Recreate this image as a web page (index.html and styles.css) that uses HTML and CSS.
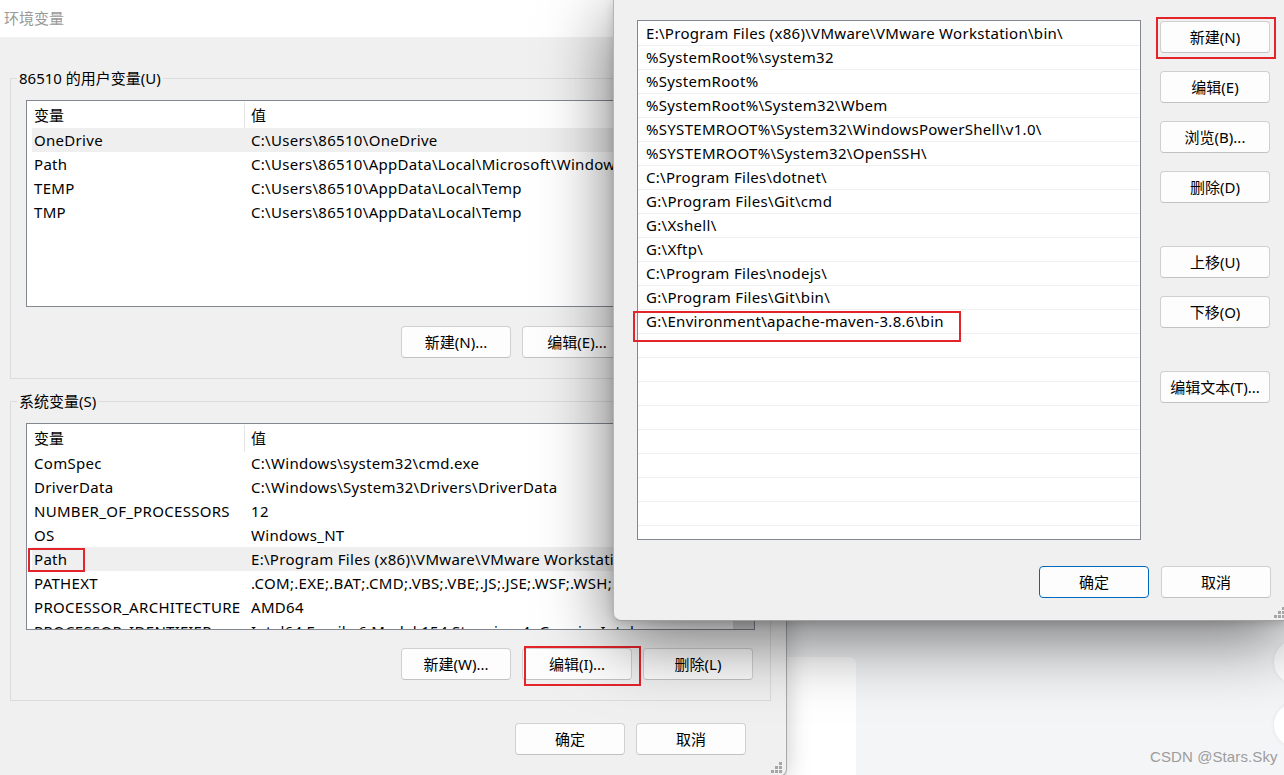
FILE: index.html
```html
<!DOCTYPE html>
<html lang="zh-CN">
<head>
<meta charset="utf-8">
<title>环境变量</title>
<link rel="stylesheet" href="styles.css">
</head>
<body>
<div class="desktop">
  <div class="bg-panel"></div>
  <div class="bg-circle circle-a"></div>
  <div class="bg-circle circle-b"></div>
  <div class="watermark">CSDN @Stars.Sky</div>

  <section class="win win-env">
    <header class="titlebar">环境变量</header>
    <div class="win-body">
      <fieldset class="group">
        <legend>86510 的用户变量(U)</legend>
        <div class="listview">
          <div class="lv-head"><span class="h1">变量</span><span class="h2">值</span></div>
          <div class="lv-row sel"><span class="c1">OneDrive</span><span class="c2">C:\Users\86510\OneDrive</span></div>
          <div class="lv-row"><span class="c1">Path</span><span class="c2">C:\Users\86510\AppData\Local\Microsoft\WindowsApps;</span></div>
          <div class="lv-row"><span class="c1">TEMP</span><span class="c2">C:\Users\86510\AppData\Local\Temp</span></div>
          <div class="lv-row"><span class="c1">TMP</span><span class="c2">C:\Users\86510\AppData\Local\Temp</span></div>
        </div>
        <div class="btn-row">
          <button class="btn">新建(N)...</button>
          <button class="btn">编辑(E)...</button>
          <button class="btn">删除(D)</button>
        </div>
      </fieldset>

      <fieldset class="group group-sys">
        <legend>系统变量(S)</legend>
        <div class="listview">
          <div class="lv-head"><span class="h1">变量</span><span class="h2">值</span></div>
          <div class="lv-row"><span class="c1">ComSpec</span><span class="c2">C:\Windows\system32\cmd.exe</span></div>
          <div class="lv-row"><span class="c1">DriverData</span><span class="c2">C:\Windows\System32\Drivers\DriverData</span></div>
          <div class="lv-row"><span class="c1">NUMBER_OF_PROCESSORS</span><span class="c2">12</span></div>
          <div class="lv-row"><span class="c1">OS</span><span class="c2">Windows_NT</span></div>
          <div class="lv-row sel"><span class="c1">Path</span><span class="c2">E:\Program Files (x86)\VMware\VMware Workstation\bin\;%SystemRoot%\system32</span><span class="mark mark-path"></span></div>
          <div class="lv-row"><span class="c1">PATHEXT</span><span class="c2">.COM;.EXE;.BAT;.CMD;.VBS;.VBE;.JS;.JSE;.WSF;.WSH;.MSC</span></div>
          <div class="lv-row"><span class="c1">PROCESSOR_ARCHITECTURE</span><span class="c2">AMD64</span></div>
          <div class="lv-row"><span class="c1">PROCESSOR_IDENTIFIER</span><span class="c2">Intel64 Family 6 Model 154 Stepping 4, GenuineIntel</span></div>
          <div class="lv-scroll"></div>
        </div>
        <div class="btn-row">
          <button class="btn">新建(W)...</button>
          <button class="btn">编辑(I)...<span class="mark mark-edit"></span></button>
          <button class="btn">删除(L)</button>
        </div>
      </fieldset>

      <div class="dlg-actions">
        <button class="btn">确定</button>
        <button class="btn">取消</button>
      </div>
    </div>
    <svg class="grip" width="11" height="11" viewBox="0 0 11 11"><rect x="8" y="0" width="3" height="3"/><rect x="4" y="4" width="3" height="3"/><rect x="8" y="4" width="3" height="3"/><rect x="0" y="8" width="3" height="3"/><rect x="4" y="8" width="3" height="3"/><rect x="8" y="8" width="3" height="3"/></svg>
  </section>

  <section class="win win-path">
    <div class="path-main">
      <div class="path-list">
        <div class="pl-row">E:\Program Files (x86)\VMware\VMware Workstation\bin\</div>
        <div class="pl-row">%SystemRoot%\system32</div>
        <div class="pl-row">%SystemRoot%</div>
        <div class="pl-row">%SystemRoot%\System32\Wbem</div>
        <div class="pl-row">%SYSTEMROOT%\System32\WindowsPowerShell\v1.0\</div>
        <div class="pl-row">%SYSTEMROOT%\System32\OpenSSH\</div>
        <div class="pl-row">C:\Program Files\dotnet\</div>
        <div class="pl-row">G:\Program Files\Git\cmd</div>
        <div class="pl-row">G:\Xshell\</div>
        <div class="pl-row">G:\Xftp\</div>
        <div class="pl-row">C:\Program Files\nodejs\</div>
        <div class="pl-row">G:\Program Files\Git\bin\</div>
        <div class="pl-row">G:\Environment\apache-maven-3.8.6\bin</div>
        <div class="pl-row"></div>
        <div class="pl-row"></div>
        <div class="pl-row"></div>
        <div class="pl-row"></div>
        <div class="pl-row"></div>
        <div class="pl-row"></div>
        <div class="pl-row"></div>
        <div class="pl-row"></div>
        <div class="pl-row"></div>
      </div>
      <span class="mark mark-maven"></span>
      <div class="side-btns">
        <button class="btn">新建(N)<span class="mark mark-new"></span></button>
        <button class="btn">编辑(E)</button>
        <button class="btn">浏览(B)...</button>
        <button class="btn">删除(D)</button>
        <button class="btn gap-before">上移(U)</button>
        <button class="btn">下移(O)</button>
        <button class="btn gap-before">编辑文本(T)...</button>
      </div>
    </div>
    <div class="dlg-actions path-actions">
      <button class="btn btn-default">确定</button>
      <button class="btn">取消</button>
    </div>
    <svg class="grip" width="11" height="11" viewBox="0 0 11 11"><rect x="8" y="0" width="3" height="3"/><rect x="4" y="4" width="3" height="3"/><rect x="8" y="4" width="3" height="3"/><rect x="0" y="8" width="3" height="3"/><rect x="4" y="8" width="3" height="3"/><rect x="8" y="8" width="3" height="3"/></svg>
  </section>
</div>
</body>
</html>
```

FILE: styles.css
```css
* { box-sizing: border-box; }
html, body { margin: 0; padding: 0; }
body {
  width: 1284px;
  height: 775px;
  overflow: hidden;
  font-family: "Noto Sans", "Noto Sans CJK SC", sans-serif;
  font-size: 15px;
  color: #000;
}
.desktop {
  position: relative;
  width: 1284px;
  height: 775px;
  overflow: hidden;
  background: #f4f5f7;
}

/* background desktop bits */
.bg-panel {
  position: absolute;
  left: 787px;
  top: 657px;
  width: 69px;
  height: 130px;
  background: #ffffff;
  border-radius: 0 6px 0 0;
}
.bg-circle {
  position: absolute;
  width: 44px;
  height: 44px;
  border-radius: 50%;
  background: #ffffff;
  box-shadow: 0 0 4px rgba(0,0,0,0.08);
}
.circle-a { left: 1274px; top: 640px; }
.circle-b { left: 1274px; top: 703px; }
.watermark {
  position: absolute;
  left: 1150px;
  top: 747px;
  font-family: "Liberation Sans", "Noto Sans", sans-serif;
  font-size: 15px;
  line-height: 20px;
  color: #9c9c9c;
  letter-spacing: 0.1px;
}

/* windows */
.win {
  position: absolute;
  background: #f0f0f0;
}
.win-env {
  left: 0;
  top: 0;
  width: 787px;
  height: 777px;
  border-right: 1px solid #a8a8a8;
  border-bottom: 1px solid #a8a8a8;
  border-radius: 0 0 8px 0;
  box-shadow: 0 0 24px rgba(0,0,0,0.22);
}
.titlebar {
  height: 37px;
  background: #ffffff;
  color: #999999;
  line-height: 37px;
  padding-left: 4px;
  font-size: 15px;
}
.win-body {
  padding: 0 15px 0 10px;
}

/* group boxes */
.group {
  margin: 31px 0 0 0;
  padding: 12px 15px 20px 15px;
  border: 1px solid #dcdcdc;
  min-width: 0;
}
.group legend {
  padding: 0 2px;
  margin-left: -9px;
  line-height: 20px;
  height: 20px;
}
.group-sys {
  margin-top: 12px;
}

/* list view */
.listview {
  position: relative;
  height: 207px;
  background: #ffffff;
  border: 1px solid #828790;
  overflow: hidden;
}
.lv-head {
  display: grid;
  grid-template-columns: 213px 1fr;
  height: 27px;
  margin-left: 5px;
  line-height: 27px;
  padding-top: 1px;
}
.lv-head .h1 {
  padding-left: 2px;
  border-right: 1px solid #e5e5e5;
}
.lv-head .h2 { padding-left: 6px; }
.lv-row {
  position: relative;
  display: grid;
  grid-template-columns: 219px 1fr;
  height: 24px;
  line-height: 24px;
  margin-left: 5px;
  white-space: nowrap;
  letter-spacing: 0.3px;
}
.lv-row .c1 { padding-left: 2px; overflow: hidden; }
.lv-row .c2 { overflow: hidden; }
.lv-row.sel { background: #efefef; }
.lv-scroll {
  position: absolute;
  right: 0;
  top: 0;
  bottom: 0;
  width: 21px;
  background: linear-gradient(#f0f0f0 0, #f0f0f0 190px, #dcdcdc 190px);
}

/* buttons */
.btn {
  position: relative;
  width: 110px;
  height: 32px;
  padding: 0;
  font-family: inherit;
  font-size: 15px;
  color: #000;
  background: #fdfdfd;
  border: 1px solid #d0d0d0;
  border-bottom-color: #c2c2c2;
  border-radius: 4px;
  line-height: 30px;
  text-align: center;
  white-space: nowrap;
}
.btn-default {
  border: 1px solid #0067c0;
}
.btn-row {
  display: flex;
  justify-content: flex-end;
  gap: 11px;
  margin-top: 19px;
  padding-right: 2px;
}
.group-sys .btn-row { margin-top: 18px; }
.dlg-actions {
  display: flex;
  justify-content: flex-end;
  gap: 11px;
  margin-top: 22px;
  padding-right: 25px;
}

/* red annotation boxes */
.mark {
  position: absolute;
  border: 2px solid #e3242b;
  pointer-events: none;
}
.mark-path { left: -4px; top: 1px; width: 57px; height: 24px; }
.mark-edit { left: 1px; top: -3px; width: 117px; height: 40px; }
.mark-maven { left: -4px; top: 291px; width: 328px; height: 31px; }
.mark-new { left: -5px; top: -5px; width: 120px; height: 42px; }

/* resize grip */
.grip {
  position: absolute;
  right: 4px;
  bottom: 3px;
  fill: #a6a6a6;
}

/* path edit dialog */
.win-path {
  left: 613px;
  top: 0;
  width: 674px;
  height: 621px;
  padding: 20px 15px 0 23px;
  border-left: 1px solid #b4b4b4;
  border-bottom: 1px solid #a0a0a0;
  border-radius: 0 0 0 8px;
  box-shadow: 0 18px 70px rgba(0,0,0,0.55), 0 2px 10px rgba(0,0,0,0.15);
  z-index: 2;
}
.path-main {
  position: relative;
  display: flex;
  align-items: flex-start;
}
.path-list {
  width: 504px;
  height: 520px;
  padding-top: 1px;
  background: #ffffff;
  border: 1px solid #828790;
  overflow: hidden;
}
.pl-row {
  position: relative;
  height: 24px;
  line-height: 23px;
  padding-left: 8px;
  border-bottom: 1px solid #f0f0f0;
  white-space: nowrap;
  letter-spacing: 0.3px;
}
.side-btns {
  display: flex;
  flex-direction: column;
  gap: 18px;
  margin-left: 19px;
  margin-top: 1px;
}
.side-btns .gap-before { margin-top: 25px; }
.path-actions {
  gap: 12px;
  margin-top: 26px;
  padding-right: 1px;
}
.win-path .grip { right: 2px; bottom: 2px; }
```
